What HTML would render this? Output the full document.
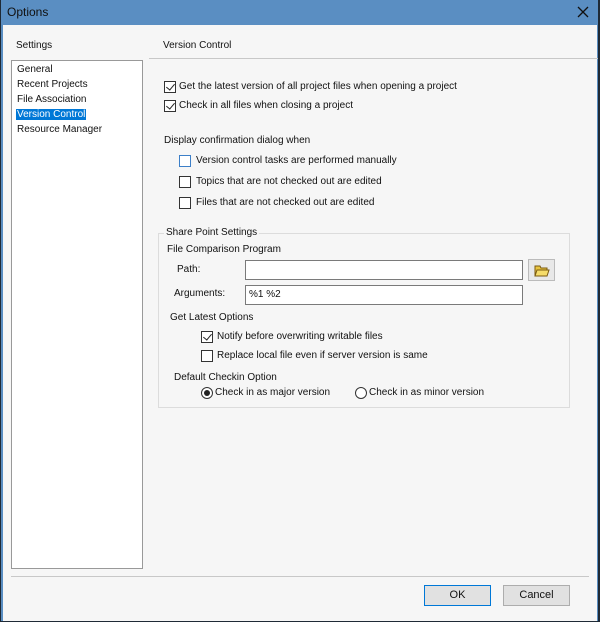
<!DOCTYPE html>
<html><head><style>
*{margin:0;padding:0;box-sizing:border-box}
body{width:600px;height:622px;background:#1f2a36;font-family:"Liberation Sans",sans-serif;font-size:10px;color:#111;position:relative;overflow:hidden}
.win{position:absolute;left:1px;top:0;width:597px;height:621px;background:#5a8ec2}
.body{position:absolute;left:2px;top:25px;width:594px;height:596px;background:#f6f6f6}
.a{position:absolute;white-space:nowrap}
.cb{position:absolute;width:12px;height:12px;border:1px solid #333;background:#fff}
.cb.c::after{content:"";position:absolute;left:3px;top:0px;width:4px;height:7px;border-right:1.5px solid #222;border-bottom:1.5px solid #222;transform:rotate(40deg)}
.rb{position:absolute;width:12px;height:12px;border:1px solid #333;border-radius:50%;background:#fff}
.tb{position:absolute;background:#fff;border:1px solid #7a7a7a}
.btn{position:absolute;height:21px;border:1px solid #adadad;background:#e1e1e1;text-align:center;line-height:19px;font-size:11px}
</style></head><body>
<div class="win">
<div class="a" style="left:6px;top:5px;font-size:12px;color:#111">Options</div>
<svg class="a" style="left:576px;top:6px" width="12" height="12"><path d="M1 1L11 11M11 1L1 11" stroke="#111" stroke-width="1.3"/></svg>
<div class="body">
<div class="a" style="left:13px;top:15px">Settings</div>
<div class="a" style="left:8px;top:35px;width:132px;height:509px;background:#fff;border:1px solid #999"></div>
<div class="a" style="left:14px;top:37px;line-height:15px">General<br>Recent Projects<br>File Association<br><span style="background:#0078d7;color:#fff;padding:0 1px;margin-left:-1px">Version Control</span><br>Resource Manager</div>
<div class="a" style="left:160px;top:15px">Version Control</div>
<div class="a" style="left:146px;top:33px;width:449px;height:1px;background:#c8c8c8"></div>
<div class="cb c" style="left:161px;top:56px"></div><div class="a" style="left:176px;top:56px">Get the latest version of all project files when opening a project</div>
<div class="cb c" style="left:161px;top:75px"></div><div class="a" style="left:176px;top:75px">Check in all files when closing a project</div>
<div class="a" style="left:161px;top:110px">Display confirmation dialog when</div>
<div class="cb" style="left:176px;top:130px;border-color:#3c7fc8"></div><div class="a" style="left:193px;top:130px">Version control tasks are performed manually</div>
<div class="cb" style="left:176px;top:151px"></div><div class="a" style="left:193px;top:151px">Topics that are not checked out are edited</div>
<div class="cb" style="left:176px;top:172px"></div><div class="a" style="left:193px;top:172px">Files that are not checked out are edited</div>
<div class="a" style="left:155px;top:208px;width:412px;height:175px;border:1px solid #dcdcdc"></div>
<div class="a" style="left:161px;top:202px;background:#f6f6f6;padding:0 2px">Share Point Settings</div>
<div class="a" style="left:164px;top:219px">File Comparison Program</div>
<div class="a" style="left:174px;top:239px">Path:</div>
<div class="tb" style="left:242px;top:235px;width:278px;height:20px"></div>
<div class="a" style="left:525px;top:234px;width:27px;height:22px;border:1px solid #bbb;background:#e8e8e8"></div>
<svg class="a" style="left:531px;top:238px" width="16" height="14"><path d="M1 3h5l1 2h6v8H1z" fill="#e8c440" stroke="#7a5a10"/><path d="M3 7h12l-2 6H1z" fill="#f5dc6a" stroke="#7a5a10"/></svg>
<div class="a" style="left:171px;top:263px">Arguments:</div>
<div class="tb" style="left:242px;top:260px;width:278px;height:20px"></div>
<div class="a" style="left:246px;top:264px">%1 %2</div>
<div class="a" style="left:167px;top:287px">Get Latest Options</div>
<div class="cb c" style="left:198px;top:306px"></div><div class="a" style="left:214px;top:306px">Notify before overwriting writable files</div>
<div class="cb" style="left:198px;top:325px"></div><div class="a" style="left:214px;top:325px">Replace local file even if server version is same</div>
<div class="a" style="left:171px;top:347px">Default Checkin Option</div>
<div class="rb" style="left:198px;top:362px"></div><div class="a" style="left:201px;top:365px;width:6px;height:6px;border-radius:50%;background:#222"></div>
<div class="a" style="left:212px;top:362px">Check in as major version</div>
<div class="rb" style="left:352px;top:362px"></div><div class="a" style="left:366px;top:362px">Check in as minor version</div>
<div class="a" style="left:8px;top:551px;width:578px;height:1px;background:#c8c8c8"></div>
<div class="btn" style="left:421px;top:560px;width:67px;border:1px solid #0078d7">OK</div>
<div class="btn" style="left:500px;top:560px;width:67px">Cancel</div>
</div></div>
</body></html>
